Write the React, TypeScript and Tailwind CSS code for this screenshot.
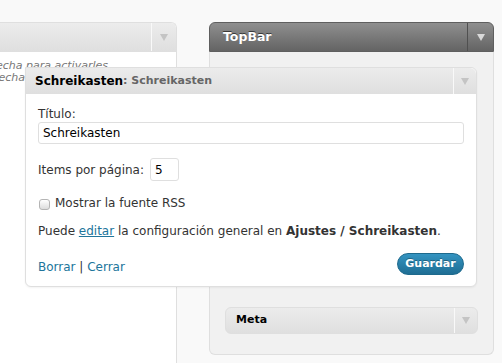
import React from "react";

function Tri({ light }: { light?: boolean }) {
  return (
    <div
      className={
        light
          ? "w-0 h-0 border-l-[4.5px] border-r-[4.5px] border-t-[7px] border-l-transparent border-r-transparent border-t-[#d9d9d9]"
          : "w-0 h-0 border-l-[4.5px] border-r-[4.5px] border-t-[7px] border-l-transparent border-r-transparent border-t-[#c4c4c4]"
      }
    />
  );
}

export default function App() {
  return (
    <div className="w-[502px] h-[363px] overflow-hidden bg-[#f9f9f9] flex items-start pt-[22px] font-['DejaVu_Sans',sans-serif] text-[#333]">
      {/* Left column */}
      <div className="w-[177px] h-[341px] shrink-0 bg-white border-t border-r border-[#dfdfdf] rounded-tr-[6px] overflow-hidden flex flex-col">
        <div className="h-[29px] shrink-0 flex bg-gradient-to-b from-[#ececec] to-[#dfdfdf] border-b border-[#dfdfdf]">
          <div className="flex-1" />
          <div className="w-[25px] border-l border-[#f9f9f9] flex items-center justify-center">
            <Tri />
          </div>
        </div>
        <div className="pt-[8px] italic text-[11px] leading-[12px] text-[#777]">
          <div className="w-[108px] flex justify-end">
            <span className="whitespace-nowrap">Arrastra los widgets a la barra lateral de la derecha para activarles</span>
          </div>
          <div className="w-[25px] flex justify-end">
            <span className="whitespace-nowrap">Arrastra los widgets de nuevo aquí desde la derecha</span>
          </div>
        </div>
      </div>

      {/* Right column */}
      <div className="ml-[32px] w-[285px] shrink-0 flex flex-col">
        <div className="h-[30px] flex rounded-t-[6px] border border-[#5f5f5f] bg-gradient-to-b from-[#8f8f8f] to-[#646464]">
          <div className="flex-1 pl-[13px] flex items-center text-[12.5px] font-bold text-white [text-shadow:0_-1px_0_#3a3a3a]">
            TopBar
          </div>
          <div className="w-[26px] border-l border-[#505050] flex items-center justify-center">
            <Tri light />
          </div>
        </div>
        <div className="bg-[#f1f1f1] border-x border-b border-[#dfdfdf] rounded-b-[6px] px-[15px] pt-[15px] pb-[20px] flex flex-col">
          {/* Popup widget */}
          <div className="relative z-10 w-[452px] ml-[-200px] border border-[#dfdfdf] rounded-[6px] rounded-tl-none bg-white shadow-[0_1px_2px_rgba(0,0,0,0.05)]">
            <div className="h-[26px] flex bg-gradient-to-b from-[#ececec] to-[#dfdfdf] rounded-tr-[6px]">
              <div className="flex-1 pl-[9px] flex items-center whitespace-nowrap">
                <span className="text-[12px] font-bold text-black">Schreikasten</span>
                <span className="text-[11px] font-bold text-[#666]">: Schreikasten</span>
              </div>
              <div className="w-[23px] border-l border-[#f9f9f9] flex items-center justify-center">
                <Tri />
              </div>
            </div>
            <div className="px-[12px] pt-[13px] pb-[10px] text-[12px] flex flex-col">
              <div className="leading-[15px]">Título:</div>
              <div className="h-[22px] border border-[#dfdfdf] rounded-[3px] px-[4px] flex items-center text-black">
                Schreikasten
              </div>
              <div className="mt-[14px] flex items-center">
                <span>Items por página:</span>
                <div className="ml-[6px] w-[29px] h-[23px] border border-[#dfdfdf] rounded-[3px] px-[4px] flex items-center text-black">
                  5
                </div>
              </div>
              <div className="mt-[14px] h-[16px] flex items-center">
                <div className="ml-[1px] w-[11px] h-[11px] mt-[2px] rounded-[3px] border border-[#b4b4b4] bg-gradient-to-b from-[#ffffff] to-[#dcdcdc]" />
                <span className="ml-[5px]">Mostrar la fuente RSS</span>
              </div>
              <div className="mt-[12px] leading-[16px] whitespace-nowrap">
                Puede <span className="text-[#21759b] underline">editar</span> la configuración general en{" "}
                <span className="font-bold">Ajustes / Schreikasten</span>.
              </div>
              <div className="mt-[13px] flex items-center justify-between">
                <div className="pt-[6px]">
                  <span className="text-[#21759b]">Borrar</span> | <span className="text-[#21759b]">Cerrar</span>
                </div>
                <div className="w-[67px] h-[22px] rounded-full border border-[#1e6a8d] bg-gradient-to-b from-[#3494c1] to-[#1f6e94] flex items-center justify-center text-[11px] font-bold text-white [text-shadow:0_-1px_0_rgba(0,0,0,0.3)]">
                  Guardar
                </div>
              </div>
            </div>
          </div>

          {/* Meta widget */}
          <div className="mt-[20px] h-[27px] flex border border-[#dfdfdf] rounded-[6px] bg-gradient-to-b from-[#ececec] to-[#dfdfdf]">
            <div className="flex-1 pl-[10px] flex items-center text-[11px] font-bold text-black">Meta</div>
            <div className="w-[23px] border-l border-[#f9f9f9] flex items-center justify-center">
              <Tri />
            </div>
          </div>
        </div>
      </div>
    </div>
  );
}
